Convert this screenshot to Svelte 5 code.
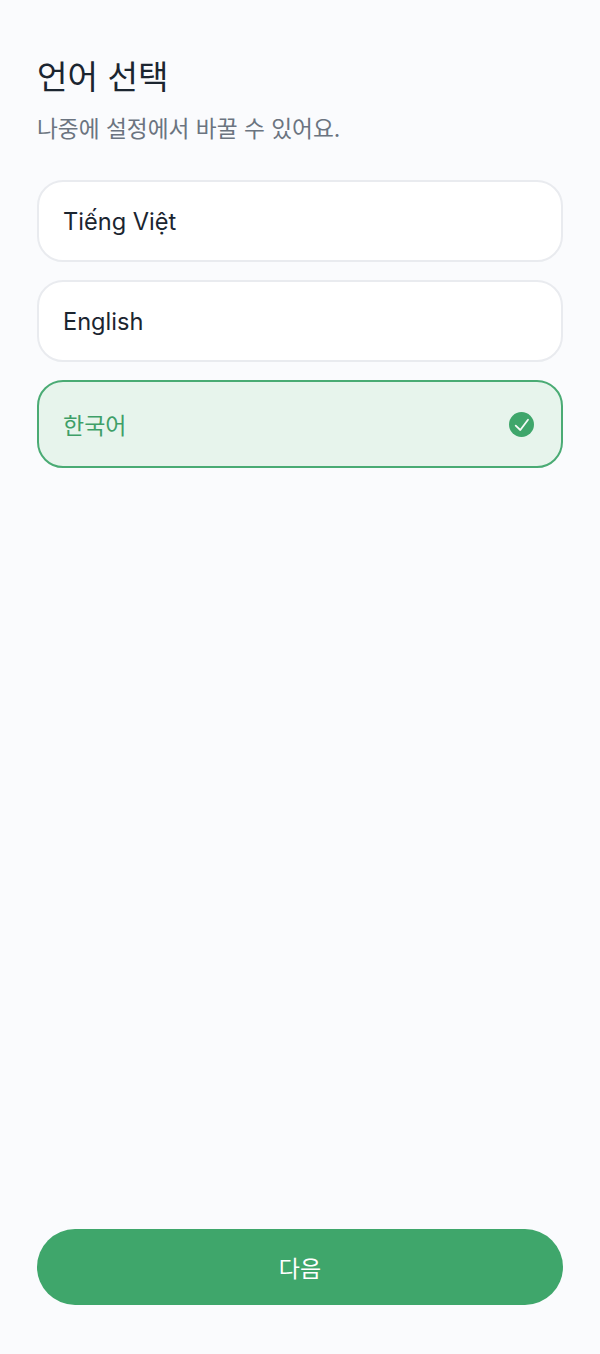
<script>
  const languages = [
    { label: 'Tiếng Việt', selected: false },
    { label: 'English', selected: false },
    { label: '한국어', selected: true }
  ];
</script>

<main class="page">
  <h1>언어 선택</h1>
  <p class="sub">나중에 설정에서 바꿀 수 있어요.</p>
  <ul class="list">
    {#each languages as lang}
      <li class="row" class:selected={lang.selected}>
        <span>{lang.label}</span>
        {#if lang.selected}
          <svg class="check" viewBox="0 0 25 25" width="25" height="25" aria-hidden="true">
            <circle cx="12.5" cy="12.5" r="12.5" fill="#3fa66b" />
            <path d="M6.7 13.7l4.6 4.3 7.7-10.3" fill="none" stroke="#f4faf6" stroke-width="1.8" stroke-linecap="round" stroke-linejoin="round" />
          </svg>
        {/if}
      </li>
    {/each}
  </ul>
  <button class="next">다음</button>
</main>

<style>
  :global(body) {
    margin: 0;
    background: #fafbfd;
  }
  .page {
    box-sizing: border-box;
    height: 1354px;
    padding: 54px 37px 49px;
    display: flex;
    flex-direction: column;
    font-family: Inter, "Noto Sans CJK KR", sans-serif;
  }
  h1 {
    margin: 0;
    font-size: 33.2px;
    line-height: 46px;
    font-weight: 400;
    color: #1b2530;
  }
  .sub {
    margin: 14px 0 0;
    font-size: 22.7px;
    line-height: 30px;
    color: #6b7480;
  }
  .list {
    list-style: none;
    margin: 36px 0 0;
    padding: 0;
    display: flex;
    flex-direction: column;
    gap: 18px;
  }
  .row {
    box-sizing: border-box;
    height: 82px;
    padding: 0 27px 0 24px;
    display: flex;
    align-items: center;
    justify-content: space-between;
    background: #fff;
    border: 2px solid #e9ebef;
    border-radius: 26px;
    font-size: 23.6px;
    color: #1b2530;
  }
  .row.selected {
    height: 88px;
    background: #e7f4ec;
    border-color: #4aab74;
    color: #3f9f68;
    font-size: 23px;
  }
  .check {
    display: block;
  }
  .next {
    margin-top: auto;
    height: 76px;
    border: 0;
    border-radius: 38px;
    background: #3fa66b;
    color: #fff;
    font: inherit;
    font-size: 23px;
  }
</style>
